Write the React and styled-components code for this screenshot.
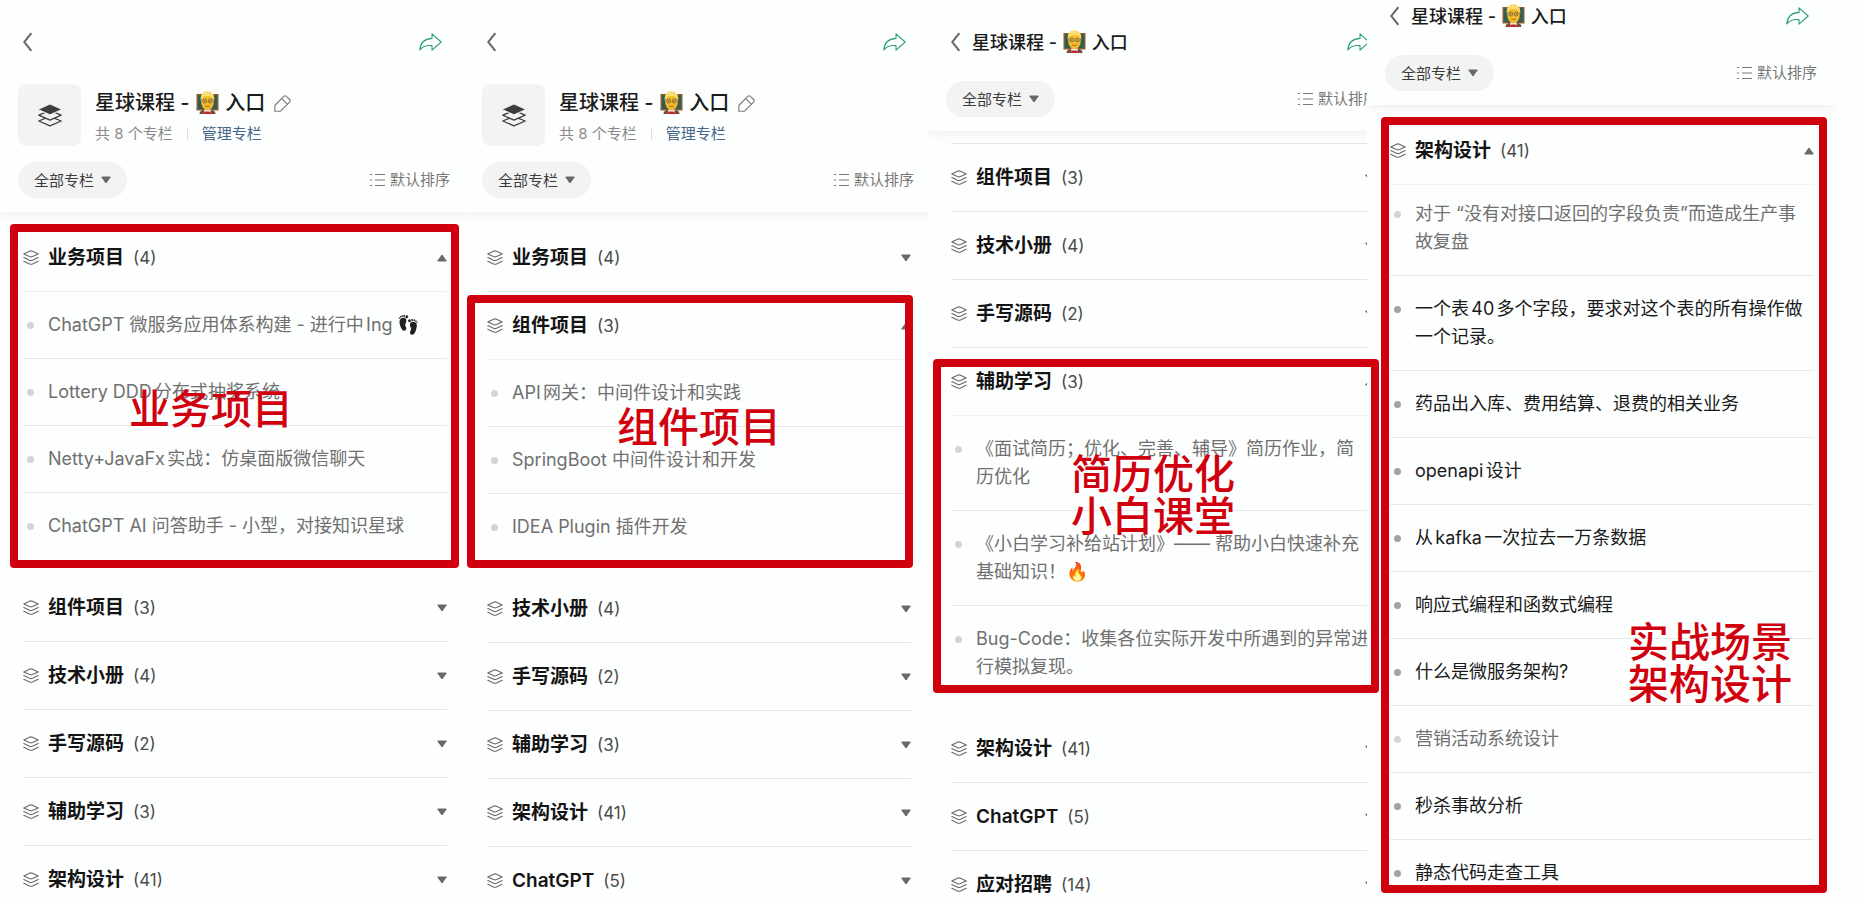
import React, { useState } from "react";
import styled, { createGlobalStyle, css } from "styled-components";

const RED = "#d1000f";

const GlobalStyle = createGlobalStyle`
  *, *::before, *::after { box-sizing: border-box; }
  body {
    margin: 0;
    background: #fdfefe;
    color: #1a1a1a;
    font-family: Inter, "Noto Sans CJK SC", "Noto Color Emoji", sans-serif;
    text-autospace: normal;
  }
  button, select { font: inherit; color: inherit; }
`;

const Board = styled.main`
  display: grid;
  grid-template-columns: 464fr 464fr 439fr 495fr;
  height: 100vh;
  overflow: hidden;
`;

const Panel = styled.section`
  position: relative;
  min-width: 0;
  padding-right: ${(p) => (p.$last ? "25px" : "0")};
`;

const Clip = styled.div`
  height: 100%;
  overflow: hidden;
`;

const Screen = styled.div`
  width: 100%;
  min-width: 470px;
`;

const Header = styled.header`
  padding: ${(p) => (p.$scrolled ? "0" : "26px")} 18px 14px;
  background: #fdfefe;
  box-shadow: 0 2px 10px rgba(0, 0, 0, 0.07);
`;

const TopBar = styled.div`
  display: flex;
  align-items: center;
  height: 32px;
  padding: 0 10px 0 5px;
`;

const IconButton = styled.button`
  display: flex;
  padding: 0;
  border: 0;
  background: none;
  cursor: pointer;
`;

const BarTitle = styled.h1`
  flex: 1;
  margin: 0 0 0 12px;
  padding-top: 2px;
  font-size: 18px;
  line-height: 28px;
  font-weight: 500;
  white-space: nowrap;
`;

const Profile = styled.div`
  display: flex;
  align-items: center;
  gap: 14px;
  margin: 26px 0 16px;
`;

const ProfileText = styled.div`
  padding-top: 4px;
`;

const Avatar = styled.div`
  display: flex;
  align-items: center;
  justify-content: center;
  width: 63px;
  height: 62px;
  border-radius: 8px;
  background: #f2f3f3;
`;

const ProfileTitle = styled.h1`
  display: flex;
  align-items: center;
  gap: 9px;
  margin: 0;
  font-size: 20px;
  line-height: 30px;
  font-weight: 500;
  white-space: nowrap;
`;

const Meta = styled.div`
  display: flex;
  align-items: center;
  gap: 14px;
  margin-top: 4px;
  font-size: 15px;
  line-height: 24px;
  color: #8a8a8a;
`;

const MetaRule = styled.span`
  width: 1px;
  height: 11px;
  background: #dcdcdc;
`;

const MetaLink = styled.a`
  color: #44658a;
  text-decoration: none;
`;

const Toolbar = styled.div`
  display: flex;
  align-items: center;
  justify-content: space-between;
  padding-top: ${(p) => (p.$compact ? "23px" : "0")};
`;

const Filter = styled.label`
  position: relative;
  display: flex;
  align-items: center;

  svg {
    position: absolute;
    right: 16px;
    pointer-events: none;
  }
`;

const FilterSelect = styled.select`
  appearance: none;
  width: 109px;
  height: 36px;
  padding: 0 0 0 16px;
  border: 0;
  border-radius: 18px;
  background: #f2f3f3;
  font-size: 15px;
  color: #3c3c3c;
`;

const SortButton = styled(IconButton)`
  align-items: center;
  gap: 5px;
  margin-right: 2px;
  font-size: 15px;
  line-height: 24px;
  color: #777;
`;

const Directory = styled.div`
  padding: 12px 23px 0;
`;

const TopRule = styled.div`
  height: 1px;
  background: #e4e5e5;
`;

const GroupButton = styled.button`
  position: relative;
  display: flex;
  align-items: center;
  width: 100%;
  height: 68px;
  padding: 0;
  border: 0;
  border-bottom: 1px solid ${(p) => (p.$open ? "#f0f1f1" : "#e4e5e5")};
  background: none;
  text-align: left;
  cursor: pointer;
  ${(p) => p.$pinned && css`margin-bottom: -4px;`}
`;

const GroupName = styled.span`
  margin-left: 9px;
  font-size: 19px;
  line-height: 28px;
  font-weight: 600;
  color: #141414;
`;

const GroupCount = styled.span`
  flex: 1;
  margin-left: 9px;
  font-size: 17px;
  line-height: 28px;
  color: #4c4c4c;
`;

const Articles = styled.ul`
  margin: 0;
  padding: 0 0 14px;
  list-style: none;
`;

const Article = styled.li`
  display: flex;
  gap: 14px;
  padding: 19px 5px 19px 4px;
  border-bottom: 1px solid #e8e9e9;

  &:last-child { border-bottom-color: transparent; }

  &::before {
    content: "";
    flex: none;
    width: 7px;
    height: 7px;
    margin-top: 11px;
    border-radius: 50%;
    background: ${(p) => (p.$unread ? "#a2a2a2" : "#d3d5d4")};
  }
`;

const ArticleLink = styled.a`
  font-size: 18px;
  line-height: 28px;
  color: ${(p) => (p.$unread ? "#1a1a1a" : "#707070")};
  text-decoration: none;
`;

const DarkEmoji = styled.span`
  filter: grayscale(1) brightness(0.35);
`;

const TeacherGlyph = styled.svg`
  width: 23px;
  height: 23px;
  margin: 0 1px;
  vertical-align: -4px;
`;

const Frame = styled.div`
  position: absolute;
  z-index: 2;
  left: ${(p) => p.$left}px;
  top: ${(p) => p.$top}px;
  width: ${(p) => p.$width}px;
  height: ${(p) => p.$height}px;
  border: 8px solid ${RED};
  border-radius: 4px;
  pointer-events: none;
`;

const Caption = styled.p`
  position: absolute;
  z-index: 3;
  left: ${(p) => p.$left}px;
  top: ${(p) => p.$top}px;
  margin: 0;
  font-size: 41px;
  line-height: 42px;
  font-weight: 500;
  color: ${RED};
  white-space: pre;
  pointer-events: none;
`;

const Teacher = () => (
  <TeacherGlyph viewBox="0 0 23 23" role="img" aria-label="老师">
    <rect x=".5" y="3" width="22" height="16.500" fill="#8a5a33" />
    <rect x="2" y="4.500" width="19" height="13.500" fill="#2f5f50" />
    <path d="M3.500 23c0-3 2.500-4.500 8-4.500s8 1.500 8 4.500Z" fill="#7a4a35" />
    <path d="M8 18.500h7l-1 4.500H9Z" fill="#f2ece6" />
    <path d="M9.500 20.500h4L15 23H8Z" fill="#c8202c" />
    <ellipse cx="11.500" cy="11" rx="6.300" ry="8.200" fill="#f5b92a" />
    <path d="M4.800 10C4 3.500 7 .2 11.500.2S19 3.500 18.200 10C17.500 7 16 5.300 11.500 5.300S5.500 7 4.800 10Z" fill="#fbdc72" />
    <circle cx="8.800" cy="10" r="1.900" fill="#fbd56a" stroke="#5a4420" strokeWidth=".7" />
    <circle cx="14.200" cy="10" r="1.900" fill="#fbd56a" stroke="#5a4420" strokeWidth=".7" />
    <circle cx="8.800" cy="10" r=".7" fill="#3b2c14" />
    <circle cx="14.200" cy="10" r=".7" fill="#3b2c14" />
    <path d="M9.300 15c1.400.7 3 .7 4.400 0" fill="none" stroke="#8a5214" strokeWidth=".9" />
  </TeacherGlyph>
);

const BackIcon = () => (
  <svg width="9" height="20" viewBox="0 0 9 20" fill="none" stroke="#66686b" strokeWidth="2">
    <path d="M8.3 1.2 1.2 10l7.1 8.8" />
  </svg>
);

const ShareIcon = () => (
  <svg width="23" height="18" viewBox="0 0 23 18" fill="none" stroke="#2a9d80" strokeWidth="1.1" strokeLinejoin="round">
    <path d="M13 .8 22.2 9 13 17.2v-4.6C7.500 11.900 3.600 13.400.8 17 1.300 10.300 5.500 5.800 13 5.400Z" />
  </svg>
);

const PencilIcon = () => (
  <svg width="17" height="17" viewBox="0 0 17 17" fill="none" stroke="#77797b" strokeWidth="1.100" strokeLinejoin="round">
    <path d="M.8 16.200V10.500L9.800 1.400c.8-.8 1.800-.8 2.600 0l3.200 3.100c.8.8.8 1.800 0 2.600L6.500 16.200Z" />
    <path d="m7.700 3.600 5.600 5.600" />
  </svg>
);

const CourseIcon = () => (
  <svg width="24" height="23" viewBox="0 0 24 23" fill="#f2f3f3" stroke="#3d3d3d" strokeWidth="1.300" strokeLinejoin="round">
    <path d="m.8 17 11.200-4.700L23.200 17 12 21.900Z" />
    <path d="M.8 11.200 12 6.500l11.200 4.700L12 16.100Z" />
    <path d="M0 5.400 12 0l12 5.400-12 5.400Z" stroke="#f2f3f3" fill="#3d3d3d" strokeWidth="1" />
  </svg>
);

const StackIcon = () => (
  <svg width="16" height="15" viewBox="0 0 16 15" fill="none" stroke="#66686a" strokeWidth="1.100" strokeLinejoin="round" strokeLinecap="round">
    <path d="M.8 4 6.500 1.200c1-.4 2-.4 3 0L15.200 4 9.500 6.600c-1 .4-2 .4-3 0Z" />
    <path d="m.8 7.600 5.700 2.700c1 .4 2 .4 3 0l5.700-2.700" />
    <path d="m.8 11.200 5.700 2.700c1 .4 2 .4 3 0l5.700-2.700" />
  </svg>
);

const SortIcon = () => (
  <svg width="15" height="14" viewBox="0 0 15 14" stroke="#77797b" strokeWidth="1.100">
    <path d="M0 1.500h2M5 1.500h10M0 7h2M5 7h10M0 12.500h2M5 12.500h10" />
  </svg>
);

const Caret = ({ up }) => (
  <svg width="10" height="8" viewBox="0 0 10 8" fill="#66686b" stroke="#66686b" strokeLinejoin="round">
    <path d={up ? "M5 1 9.300 7H.7Z" : "M5 7 .7 1h8.600Z"} />
  </svg>
);

const Back = () => (
  <IconButton aria-label="返回">
    <BackIcon />
  </IconButton>
);

const Share = styled(IconButton)`
  margin-left: auto;
`;

const CourseName = () => (
  <span>
    星球课程 - <Teacher /> 入口
  </span>
);

function ScreenHeader({ compact, scrolled }) {
  return (
    <Header $scrolled={scrolled}>
      <TopBar>
        <Back />
        {compact && (
          <BarTitle>
            <CourseName />
          </BarTitle>
        )}
        <Share aria-label="分享">
          <ShareIcon />
        </Share>
      </TopBar>
      {!compact && (
        <Profile>
          <Avatar>
            <CourseIcon />
          </Avatar>
          <ProfileText>
            <ProfileTitle>
              <CourseName />
              <IconButton aria-label="编辑">
                <PencilIcon />
              </IconButton>
            </ProfileTitle>
            <Meta>
              <span>共 8 个专栏</span>
              <MetaRule />
              <MetaLink href="#manage">管理专栏</MetaLink>
            </Meta>
          </ProfileText>
        </Profile>
      )}
      <Toolbar $compact={compact}>
        <Filter>
          <FilterSelect aria-label="专栏">
            <option>全部专栏</option>
          </FilterSelect>
          <Caret />
        </Filter>
        <SortButton>
          <SortIcon />
          默认排序
        </SortButton>
      </Toolbar>
    </Header>
  );
}

function Group({ name, count, items, pinned }) {
  const [open, setOpen] = useState(Boolean(items));
  return (
    <div>
      <GroupButton aria-expanded={open} $open={open} $pinned={pinned} onClick={() => setOpen(!open)}>
        <StackIcon />
        <GroupName>{name}</GroupName>
        <GroupCount>({count})</GroupCount>
        <Caret up={open} />
      </GroupButton>
      {open && items && (
        <Articles>
          {items.map(({ text, mark, unread }) => (
            <Article key={text} $unread={unread}>
              <ArticleLink href="#article" $unread={unread}>
                {text}
                {mark && <DarkEmoji>{mark}</DarkEmoji>}
              </ArticleLink>
            </Article>
          ))}
        </Articles>
      )}
    </div>
  );
}

const read = (text, mark) => ({ text, mark });
const unread = (text) => ({ text, unread: true });

const panels = [
  {
    groups: [
      {
        name: "业务项目",
        count: 4,
        items: [
          read("ChatGPT 微服务应用体系构建 - 进行中Ing ", "👣"),
          read("Lottery DDD分布式抽奖系统"),
          read("Netty+JavaFx实战：仿桌面版微信聊天"),
          read("ChatGPT AI 问答助手 - 小型，对接知识星球"),
        ],
      },
      { name: "组件项目", count: 3 },
      { name: "技术小册", count: 4 },
      { name: "手写源码", count: 2 },
      { name: "辅助学习", count: 3 },
      { name: "架构设计", count: 41 },
    ],
    frame: { $left: 10, $top: 224, $width: 449, $height: 344 },
    caption: { $left: 129, $top: 388, text: "业务项目" },
  },
  {
    groups: [
      { name: "业务项目", count: 4 },
      {
        name: "组件项目",
        count: 3,
        items: [
          read("API网关：中间件设计和实践"),
          read("SpringBoot 中间件设计和开发"),
          read("IDEA Plugin 插件开发"),
        ],
      },
      { name: "技术小册", count: 4 },
      { name: "手写源码", count: 2 },
      { name: "辅助学习", count: 3 },
      { name: "架构设计", count: 41 },
      { name: "ChatGPT", count: 5 },
    ],
    frame: { $left: 3, $top: 295, $width: 446, $height: 273 },
    caption: { $left: 153, $top: 406, text: "组件项目" },
  },
  {
    compact: true,
    ruled: true,
    groups: [
      { name: "组件项目", count: 3 },
      { name: "技术小册", count: 4 },
      { name: "手写源码", count: 2 },
      {
        name: "辅助学习",
        count: 3,
        items: [
          read("《面试简历；优化、完善、辅导》简历作业，简历优化"),
          read("《小白学习补给站计划》—— 帮助小白快速补充基础知识！🔥"),
          read("Bug-Code：收集各位实际开发中所遇到的异常进行模拟复现。"),
        ],
      },
      { name: "架构设计", count: 41 },
      { name: "ChatGPT", count: 5 },
      { name: "应对招聘", count: 14 },
    ],
    frame: { $left: 5, $top: 359, $width: 446, $height: 334 },
    caption: { $left: 143, $top: 453, text: "简历优化\n小白课堂" },
  },
  {
    compact: true,
    scrolled: true,
    groups: [
      {
        name: "架构设计",
        count: 41,
        pinned: true,
        items: [
          read("对于 “没有对接口返回的字段负责”而造成生产事故复盘"),
          unread("一个表40多个字段，要求对这个表的所有操作做一个记录。"),
          unread("药品出入库、费用结算、退费的相关业务"),
          unread("openapi设计"),
          unread("从kafka一次拉去一万条数据"),
          unread("响应式编程和函数式编程"),
          unread("什么是微服务架构?"),
          read("营销活动系统设计"),
          unread("秒杀事故分析"),
          unread("静态代码走查工具"),
        ],
      },
    ],
    frame: { $left: 14, $top: 117, $width: 446, $height: 776 },
    caption: { $left: 261, $top: 621, text: "实战场景\n架构设计" },
  },
];

export default function App() {
  return (
    <>
      <GlobalStyle />
      <Board>
        {panels.map((panel, i) => (
          <Panel key={i} $last={i === panels.length - 1}>
            <Clip>
              <Screen>
                <ScreenHeader compact={panel.compact} scrolled={panel.scrolled} />
                <Directory>
                  {panel.ruled && <TopRule />}
                  {panel.groups.map((group) => (
                    <Group key={group.name} {...group} />
                  ))}
                </Directory>
              </Screen>
            </Clip>
            <Frame {...panel.frame} />
            <Caption $left={panel.caption.$left} $top={panel.caption.$top}>
              {panel.caption.text}
            </Caption>
          </Panel>
        ))}
      </Board>
    </>
  );
}
